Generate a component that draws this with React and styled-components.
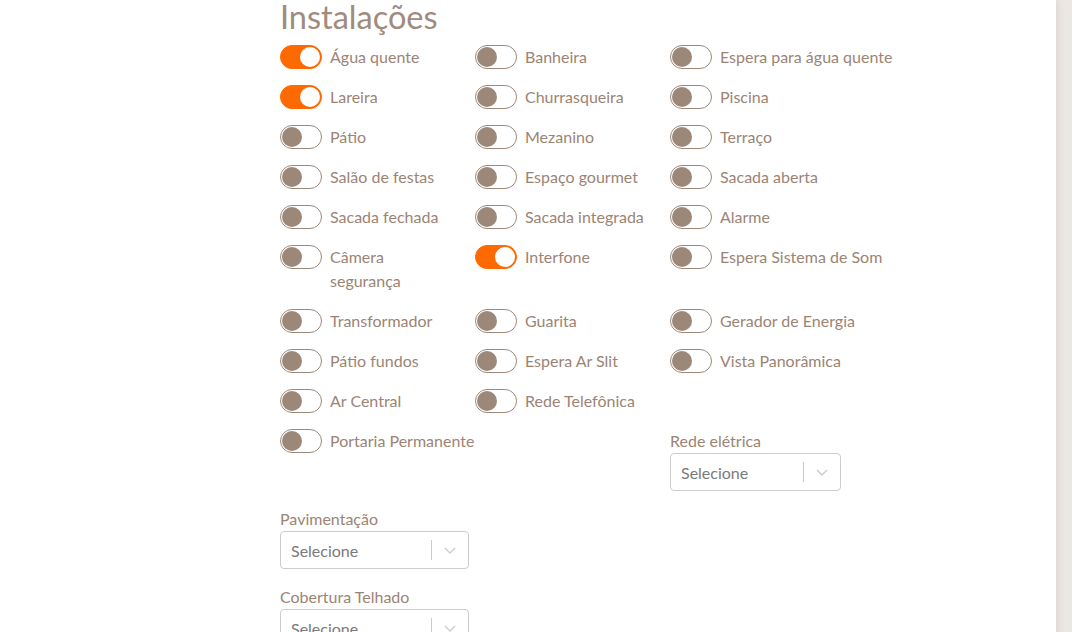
import React from "react"
import styled, { createGlobalStyle } from "styled-components"

const GlobalStyle = createGlobalStyle`
  html, body {
    margin: 0;
    padding: 0;
    background: #ebe7e3;
    font-family: Lato, "Open Sans", sans-serif;
    overflow: hidden;
  }
`

const Page = styled.div`
  display: flex;
  min-height: 632px;
`

const Panel = styled.main`
  width: 1056px;
  background: #fff;
  box-shadow: 2px 0 6px rgba(120, 100, 90, 0.12);
  padding: 1px 0 0 280px;
  box-sizing: border-box;
`

const Title = styled.h2`
  margin: 0 0 12px;
  font-size: 32.5px;
  line-height: 32px;
  font-weight: 400;
  color: #a08b7d;
`

const Grid = styled.div`
  display: grid;
  grid-template-columns: repeat(3, 195px);
  row-gap: 16px;
  align-items: start;
`

const Item = styled.label`
  display: flex;
  align-items: flex-start;
  gap: 8px;
  font-size: 16px;
  line-height: 24px;
  color: #9c8475;
  white-space: nowrap;
`

const Track = styled.span`
  flex: none;
  position: relative;
  width: 42px;
  height: 24px;
  border-radius: 12px;
  box-sizing: border-box;
  background: ${(p) => (p.$on ? "#ff6a00" : "#fff")};
  border: 1px solid ${(p) => (p.$on ? "#ff6a00" : "#9c8878")};
`

const Knob = styled.span`
  position: absolute;
  top: 1px;
  left: ${(p) => (p.$on ? "19px" : "1px")};
  width: 20px;
  height: 20px;
  border-radius: 50%;
  background: ${(p) => (p.$on ? "#fff" : "#9c8878")};
`

const Field = styled.div`
  display: flex;
  flex-direction: column;
  grid-column: ${(p) => p.$col || "auto"};
`

const FieldLabel = styled.span`
  font-size: 16px;
  line-height: 24px;
  color: #9c8475;
`

const Select = styled.div`
  display: flex;
  align-items: center;
  width: ${(p) => p.$w}px;
  height: 38px;
  box-sizing: border-box;
  border: 1px solid #cccccc;
  border-radius: 4px;
  background: #fff;
`

const SelectValue = styled.span`
  flex: 1;
  padding-left: 10px;
  font-size: 16px;
  color: #7a7a7a;
`

const Separator = styled.span`
  width: 1px;
  height: 20px;
  background: #cccccc;
`

const Chevron = styled.span`
  display: flex;
  align-items: center;
  justify-content: center;
  width: 36px;
  color: #cccccc;
`

const Toggle = ({ on, children }) => (
  <Item>
    <Track $on={on}>
      <Knob $on={on} />
    </Track>
    <span>{children}</span>
  </Item>
)

const Dropdown = ({ label, width, col }) => (
  <Field $col={col}>
    <FieldLabel>{label}</FieldLabel>
    <Select $w={width}>
      <SelectValue>Selecione</SelectValue>
      <Separator />
      <Chevron>
        <svg width="14" height="14" viewBox="0 0 14 14" fill="none" stroke="currentColor" strokeWidth="1.4">
          <polyline points="2,5 7,10 12,5" />
        </svg>
      </Chevron>
    </Select>
  </Field>
)

const items = [
  ["Água quente", true], ["Banheira"], ["Espera para água quente"],
  ["Lareira", true], ["Churrasqueira"], ["Piscina"],
  ["Pátio"], ["Mezanino"], ["Terraço"],
  ["Salão de festas"], ["Espaço gourmet"], ["Sacada aberta"],
  ["Sacada fechada"], ["Sacada integrada"], ["Alarme"],
  [<>Câmera<br />segurança</>], ["Interfone", true], ["Espera Sistema de Som"],
  ["Transformador"], ["Guarita"], ["Gerador de Energia"],
  ["Pátio fundos"], ["Espera Ar Slit"], ["Vista Panorâmica"],
  ["Ar Central"], ["Rede Telefônica"],
]

export default function App() {
  return (
    <Page>
      <GlobalStyle />
      <Panel>
        <Title>Instalações</Title>
        <Grid>
          {items.map(([text, on], i) => (
            <Toggle key={i} on={on}>{text}</Toggle>
          ))}
          <div />
          <Toggle>Portaria Permanente</Toggle>
          <div />
          <Dropdown label="Rede elétrica" width={171} />
          <Dropdown label="Pavimentação" width={189} col="1" />
          <Dropdown label="Cobertura Telhado" width={189} col="1" />
        </Grid>
      </Panel>
    </Page>
  )
}
